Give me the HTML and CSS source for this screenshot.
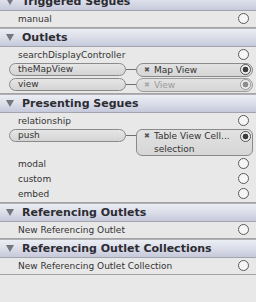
FILE: index.html
```html
<!DOCTYPE html>
<html lang="en">
<head>
  <meta charset="UTF-8" />
  <title>Connections</title>
  <link rel="stylesheet" href="styles.css">
</head>
<body>
  <div class="panel">
    <!-- Triggered Segues -->
    <div class="section">
      <div class="head"><span class="tri"></span>Triggered Segues</div>
      <div class="row"><span class="label">manual</span><span class="dot"></span></div>
    </div>

    <!-- Outlets -->
    <div class="section">
      <div class="head"><span class="tri"></span>Outlets</div>
      <div class="row"><span class="label">searchDisplayController</span><span class="dot"></span></div>
      <div class="row">
        <span class="pill">theMapView</span><span class="wire"></span>
        <span class="target"><span class="x">✖</span><span class="name">Map View</span><span class="dot on"></span></span>
      </div>
      <div class="row">
        <span class="pill">view</span><span class="wire"></span>
        <span class="target dim"><span class="x">✖</span><span class="name">View</span><span class="dot on"></span></span>
      </div>
    </div>

    <!-- Presenting Segues -->
    <div class="section">
      <div class="head"><span class="tri"></span>Presenting Segues</div>
      <div class="row"><span class="label">relationship</span><span class="dot"></span></div>
      <div class="row tall">
        <span class="pill">push</span><span class="wire"></span>
        <span class="target box">
          <span class="line"><span class="x">✖</span><span class="name">Table View Cell...</span><span class="dot on"></span></span>
          <span class="line sub">selection</span>
        </span>
      </div>
      <div class="row"><span class="label">modal</span><span class="dot"></span></div>
      <div class="row"><span class="label">custom</span><span class="dot"></span></div>
      <div class="row"><span class="label">embed</span><span class="dot"></span></div>
    </div>

    <!-- Referencing Outlets -->
    <div class="section">
      <div class="head"><span class="tri"></span>Referencing Outlets</div>
      <div class="row"><span class="label">New Referencing Outlet</span><span class="dot"></span></div>
    </div>

    <!-- Referencing Outlet Collections -->
    <div class="section">
      <div class="head"><span class="tri"></span>Referencing Outlet Collections</div>
      <div class="row"><span class="label">New Referencing Outlet Collection</span><span class="dot"></span></div>
    </div>
  </div>
</body>
</html>
```

FILE: styles.css
```css
:root {
  --bg: #e8e8e8;
  --line: #a4a4a4;
  --text: #333333;
  --head-text: #2c2c33;
}

body {
  margin: 0;
  background-color: var(--bg);
  font-family: 'DejaVu Sans', sans-serif;
  color: var(--text);
  overflow: hidden;
}

.panel {
  margin-top: -8px;
}

.section {
  border-bottom: 1px solid var(--line);
  padding-bottom: 1px;
}

.head {
  display: flex;
  align-items: center;
  height: 17px;
  padding-left: 6px;
  border-top: 1px solid #b0b0b6;
  border-bottom: 1px solid #a2a4ae;
  background: linear-gradient(#eceef5, #d9dbe7 55%, #c6c9db);
  color: var(--head-text);
  font-size: 11px;
  font-weight: bold;
}

.tri {
  width: 0;
  height: 0;
  margin-right: 8px;
  border-left: 4px solid transparent;
  border-right: 4px solid transparent;
  border-top: 7px solid #75767c;
}

.row {
  display: flex;
  align-items: center;
  height: 15px;
  padding-left: 9px;
  padding-right: 5px;
  font-size: 9px;
}

.row.tall {
  align-items: flex-start;
  height: 28px;
  padding-top: 1px;
  box-sizing: border-box;
}

.label {
  padding-left: 9px;
  flex: 1;
}

.pill {
  box-sizing: border-box;
  width: 117px;
  height: 13px;
  line-height: 11px;
  padding-left: 8px;
  border: 1px solid #8a8a8a;
  border-radius: 7px;
  background: linear-gradient(#e6e6e6, #d4d4d4);
}

.wire {
  width: 10px;
  height: 1px;
  background-color: #6f6f6f;
}

.tall .wire {
  margin-top: 6px;
}

.target {
  flex: 1;
  display: flex;
  align-items: center;
  box-sizing: border-box;
  height: 14px;
  margin-right: -2px;
  padding: 0 1px 0 7px;
  border: 1px solid #8a8a8a;
  border-radius: 7px;
  background: linear-gradient(#e2e2e2, #d6d6d6);
}

.target.box {
  flex-direction: column;
  align-items: stretch;
  height: 27px;
  border-radius: 6px;
}

.line {
  display: flex;
  align-items: center;
  height: 12px;
}

.line.sub {
  padding-left: 10px;
  height: 13px;
}

.x {
  font-size: 7px;
  color: #555;
  margin-right: 4px;
}

.name {
  flex: 1;
}

.dot {
  box-sizing: border-box;
  width: 11px;
  height: 11px;
  margin-left: auto;
  margin-right: 2px;
  border: 1px solid #5a5a5a;
  border-radius: 50%;
  background-color: #f6f6f6;
}

.target .dot {
  margin-right: 0;
}

.dot.on {
  background: radial-gradient(circle, #3c3c3c 0 2.6px, #f4f4f4 3.2px);
  border: 1.5px solid #555;
}

.target.dim {
  color: #9a9a9a;
  border-color: #9c9c9c;
}

.dim .x {
  color: #aaa;
}

.dim .dot.on {
  background: radial-gradient(circle, #8c8c8c 0 2.6px, #f0f0f0 3.2px);
  border-color: #999;
}
```
